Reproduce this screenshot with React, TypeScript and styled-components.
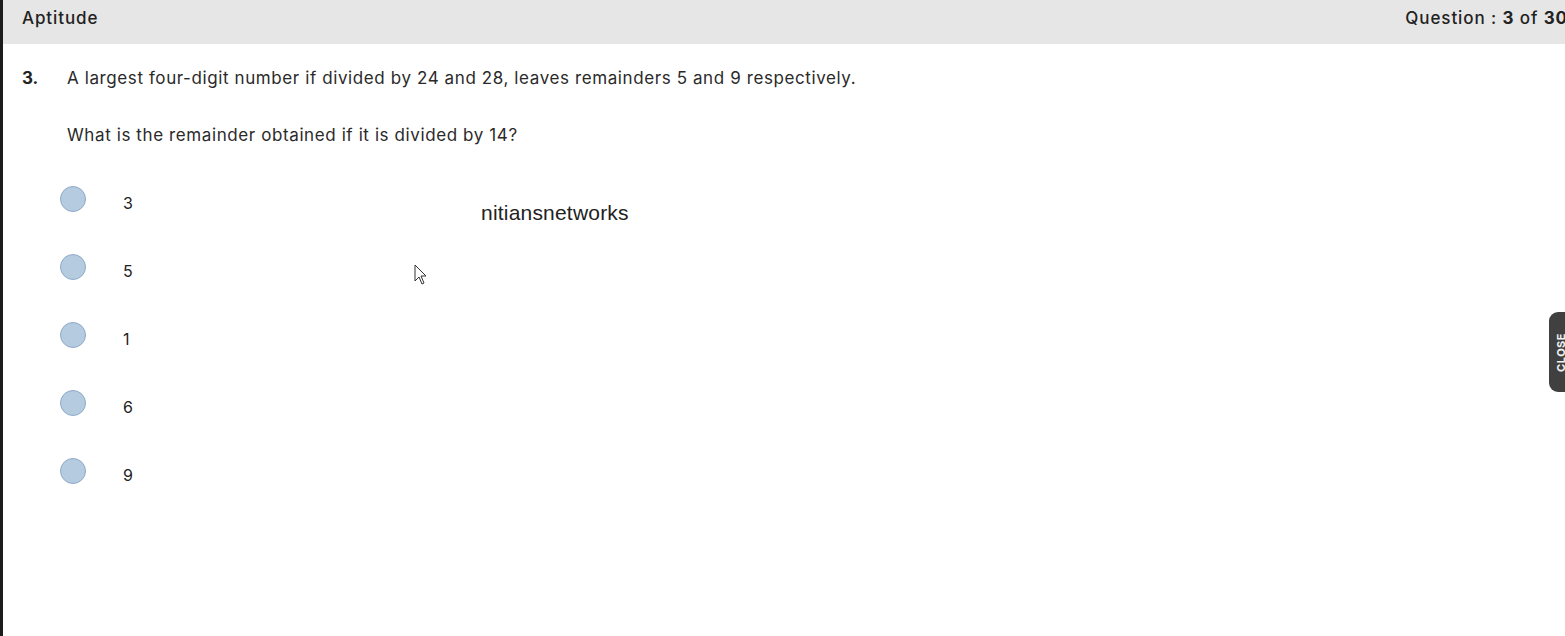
import styled, { createGlobalStyle } from "styled-components";

const GlobalStyle = createGlobalStyle`
  html, body {
    margin: 0;
    padding: 0;
    background: #ffffff;
    font-family: Inter, "Noto Sans", sans-serif;
  }
  #root {
    height: 636px;
  }
`;

const Page = styled.div`
  position: relative;
  height: 636px;
  overflow: hidden;
  border-left: 3px solid #1c1c1c;
  box-sizing: border-box;
`;

const Header = styled.div`
  height: 44px;
  box-sizing: border-box;
  background-color: #e6e6e6;
  display: flex;
  align-items: flex-start;
  justify-content: space-between;
  padding: 8px 0 0 19px;
  font-size: 17px;
  font-weight: 500;
  letter-spacing: 0.9px;
  color: #222;
`;

const Counter = styled.div`
  margin-right: -3px;
  letter-spacing: 0.9px;
  b {
    font-weight: 700;
  }
`;

const Body = styled.div`
  display: flex;
  padding: 22px 0 0 19px;
`;

const Number = styled.div`
  width: 45px;
  font-size: 17px;
  font-weight: 700;
  color: #222;
  line-height: 24px;
`;

const Content = styled.div`
  display: flex;
  flex-direction: column;
`;

const Stem = styled.p`
  margin: 0 0 33px;
  font-size: 17px;
  letter-spacing: 0.6px;
  line-height: 24px;
  color: #2a2a2a;
  white-space: nowrap;
`;

const Options = styled.div`
  display: flex;
  flex-direction: column;
  gap: 42px;
  margin-top: 6px;
  margin-left: -7px;
`;

const Option = styled.label`
  display: flex;
  align-items: center;
  gap: 37px;
  height: 26px;
  font-size: 16px;
  color: #222;
`;

const Radio = styled.span`
  width: 24px;
  height: 24px;
  border-radius: 50%;
  background-color: #b5cbe0;
  border: 1px solid #8eaac6;
`;

const OptionText = styled.span<{ $shift: number }>`
  transform: translateY(${(p) => p.$shift}px);
`;

const Watermark = styled.div`
  position: absolute;
  left: 478px;
  top: 201px;
  font-family: "Liberation Sans", Arial, sans-serif;
  font-size: 21px;
  letter-spacing: 0.2px;
  color: #222;
`;

const Cursor = styled.svg`
  position: absolute;
  left: 411px;
  top: 264px;
`;

const CloseTab = styled.div`
  position: absolute;
  right: 0;
  top: 312px;
  width: 16px;
  height: 80px;
  background-color: #404040;
  border-radius: 9px 0 0 9px;
  display: flex;
  align-items: center;
  justify-content: flex-start;
  overflow: hidden;
`;

const CloseText = styled.span`
  writing-mode: vertical-rl;
  transform: rotate(180deg);
  font-size: 11px;
  font-weight: 700;
  color: #f2f2f2;
  margin-left: 5px;
  letter-spacing: 0.5px;
`;

const options = [
  { label: "3", shift: 4 },
  { label: "5", shift: 4 },
  { label: "1", shift: 4 },
  { label: "6", shift: 4 },
  { label: "9", shift: 4 },
];

export default function App() {
  return (
    <>
      <GlobalStyle />
      <Page>
        <Header>
          <span>Aptitude</span>
          <Counter>
            Question : <b>3</b> of <b>30</b>
          </Counter>
        </Header>
        <Body>
          <Number>3.</Number>
          <Content>
            <Stem>
              A largest four-digit number if divided by 24 and 28, leaves
              remainders 5 and 9 respectively.
            </Stem>
            <Stem>What is the remainder obtained if it is divided by 14?</Stem>
            <Options>
              {options.map((o, i) => (
                <Option key={i}>
                  <Radio />
                  <OptionText $shift={o.shift}>{o.label}</OptionText>
                </Option>
              ))}
            </Options>
          </Content>
        </Body>
        <Watermark>nitiansnetworks</Watermark>
        <Cursor width="14" height="22" viewBox="0 0 14 22">
          <path
            d="M1 1 L1 17 L5 13 L8 20 L10 19 L7 12 L12 12 Z"
            fill="#fff"
            stroke="#333"
            strokeWidth="1"
            strokeLinejoin="round"
          />
        </Cursor>
        <CloseTab>
          <CloseText>CLOSE</CloseText>
        </CloseTab>
      </Page>
    </>
  );
}
